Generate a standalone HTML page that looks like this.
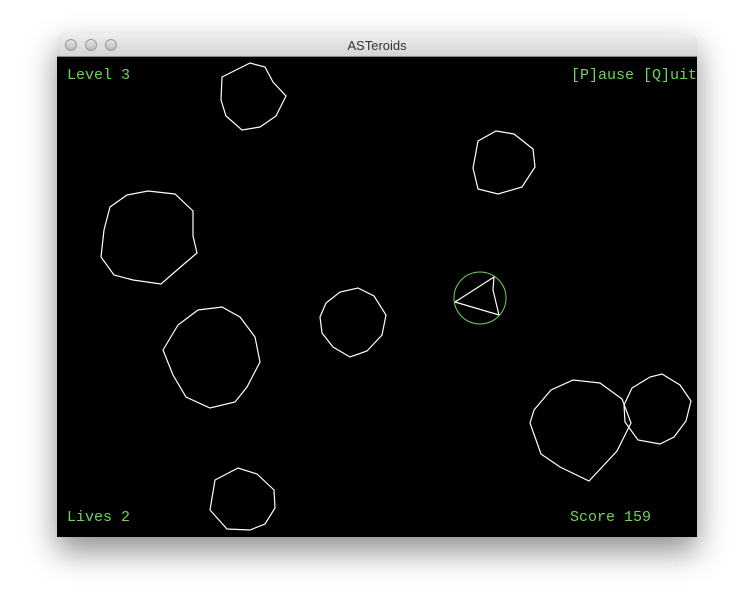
<!DOCTYPE html>
<html><head><style>
html,body{margin:0;padding:0;background:#fff;}
body{width:754px;height:616px;position:relative;overflow:hidden;font-family:"Liberation Sans",sans-serif;}
.win{position:absolute;left:57px;top:34px;width:640px;height:503px;box-shadow:0 14px 30px rgba(0,0,0,0.45);}
.tb{position:absolute;left:0;top:0;width:640px;height:23px;background:linear-gradient(#eeeeee,#d4d4d4);border-radius:4px 4px 0 0;border-bottom:1px solid #888;box-sizing:border-box;}
.tb .t{position:absolute;left:0;right:0;top:4px;text-align:center;font-size:13px;color:#333;}
.b{position:absolute;top:5px;width:12px;height:12px;border-radius:50%;background:linear-gradient(#e4e4e4,#bdbdbd);border:1px solid #999;box-sizing:border-box;}
.gm{position:absolute;left:0;top:23px;width:640px;height:480px;background:#000;overflow:hidden;}
.txt{position:absolute;font-family:"Liberation Mono",monospace;font-size:15px;color:#6fd45a;white-space:nowrap;}
</style></head><body>
<div class="win">
<div class="tb"><div class="b" style="left:8px"></div><div class="b" style="left:28px"></div><div class="b" style="left:48px"></div><div class="t">ASTeroids</div></div>
<div class="gm">
<div class="txt" style="left:10px;top:10px">Level 3</div>
<div class="txt" style="left:514px;top:10px">[P]ause [Q]uit</div>
<div class="txt" style="left:10px;top:452px">Lives 2</div>
<div class="txt" style="left:513px;top:452px">Score 159</div>
</div>
</div>
<svg style="position:absolute;left:0;top:0" width="754" height="616" viewBox="0 0 754 616">
<defs><clipPath id="c"><rect x="57" y="57" width="640" height="480"/></clipPath></defs>
<g clip-path="url(#c)" fill="none" stroke="#fff" stroke-width="1.2">
<polygon points="222,77 236,70 250,63 265,67 273,82 286,96 276,116 260,127 242,130 226,116 221,100"/>
<polygon points="478,141 496,131 514,134 533,149 535,167 522,187 498,194 478,189 473,168"/>
<polygon points="110,207 127,195 148,191 175,194 193,211 193,236 197,253 184,264 161,284 133,280 114,275 101,257 104,230"/>
<polygon points="326,303 340,292 358,288 374,296 386,315 382,335 367,351 350,357 333,347 322,333 320,317"/>
<polygon points="178,325 198,310 222,307 240,317 255,337 260,362 247,387 235,402 210,408 186,397 173,375 163,350"/>
<polygon points="534,410 551,390 573,380 600,383 622,399 631,423 617,451 589,481 560,467 541,454 530,423"/>
<polygon points="632,388 650,377 662,374 680,385 691,401 686,421 674,437 660,444 638,440 625,422 624,405"/>
<polygon points="215,480 238,468 257,474 274,490 275,508 265,524 250,530 227,529 210,510"/>
<polygon points="455,302 494,277 493,290 499,315"/>
</g>
<circle cx="480" cy="298" r="26" fill="none" stroke="#6fd45a" stroke-width="1"/>
</svg>
</body></html>
